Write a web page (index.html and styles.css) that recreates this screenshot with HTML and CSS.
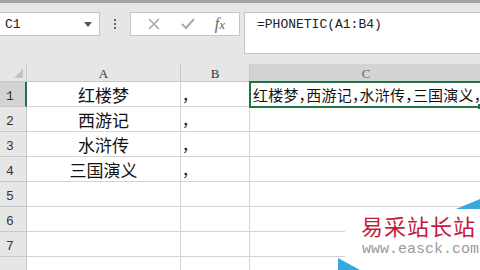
FILE: index.html
```html
<!DOCTYPE html>
<html lang="zh-CN">
<head>
    <meta charset="UTF-8">
    <title>PHONETIC</title>
    <link rel="stylesheet" href="styles.css">
</head>
<body>
    <div class="topline"></div>
    <!-- 名称框与编辑栏 -->
    <div class="toolbar">
        <div class="namebox">
            <span>C1</span>
            <svg width="8" height="5" viewBox="0 0 8 5"><path d="M0,0 L8,0 L4,5 Z" fill="#555"/></svg>
        </div>
        <div class="dots"><i></i><i></i><i></i></div>
        <div class="fxbox">
            <svg width="14" height="14" viewBox="0 0 14 14"><path d="M2,2 L12,12 M12,2 L2,12" stroke="#a8a8a8" stroke-width="1.6"/></svg>
            <svg width="14" height="14" viewBox="0 0 14 14"><path d="M1,7 L5,11 L13,2" stroke="#a8a8a8" stroke-width="2" fill="none"/></svg>
            <span class="fx">f<small>x</small></span>
        </div>
        <div class="formula">=PHONETIC(A1:B4)</div>
    </div>

    <!-- 表格 -->
    <div class="sheet">
        <div class="hd corner"><svg width="9" height="9" viewBox="0 0 9 9"><path d="M9,0 L9,9 L0,9 Z" fill="#c4c4c4"/></svg></div>
        <div class="hd">A</div>
        <div class="hd">B</div>
        <div class="hd sel">C</div>

        <div class="rh sel">1</div>
        <div class="cell a">红楼梦</div>
        <div class="cell b">，</div>
        <div class="cell c active">红楼梦，西游记，水浒传，三国演义，<span class="handle"></span></div>

        <div class="rh">2</div>
        <div class="cell a">西游记</div>
        <div class="cell b">，</div>
        <div class="cell c"></div>

        <div class="rh">3</div>
        <div class="cell a">水浒传</div>
        <div class="cell b">，</div>
        <div class="cell c"></div>

        <div class="rh">4</div>
        <div class="cell a">三国演义</div>
        <div class="cell b">，</div>
        <div class="cell c"></div>

        <div class="rh">5</div>
        <div class="cell a"></div>
        <div class="cell b"></div>
        <div class="cell c"></div>

        <div class="rh">6</div>
        <div class="cell a"></div>
        <div class="cell b"></div>
        <div class="cell c"></div>

        <div class="rh">7</div>
        <div class="cell a"></div>
        <div class="cell b"></div>
        <div class="cell c"></div>

        <div class="rh"></div>
        <div class="cell a"></div>
        <div class="cell b"></div>
        <div class="cell c"></div>
    </div>

    <!-- 水印 -->
    <div class="watermark">
        <span class="tri tri-top"></span>
        <div class="wm-title">易采站长站</div>
        <div class="wm-url">www.easck.com</div>
        <span class="tri tri-bottom"></span>
    </div>
</body>
</html>
```

FILE: styles.css
```css
body {
    margin: 0;
    width: 480px;
    height: 270px;
    overflow: hidden;
    background: #fff;
    font-family: "Liberation Mono", monospace;
    position: relative;
}
.topline {
    height: 3px;
    background: #a3a3a3;
}
.toolbar {
    display: flex;
    align-items: flex-start;
    background: #e6e6e6;
    height: 61px;
    padding-top: 9px;
    box-sizing: border-box;
}
.namebox {
    width: 100px;
    height: 24px;
    box-sizing: border-box;
    background: #fff;
    border: 1px solid #c6c6c6;
    border-left: none;
    display: flex;
    align-items: center;
    justify-content: space-between;
    padding: 0 7px 0 5px;
    font-size: 13px;
    color: #222;
}
.dots {
    width: 30px;
    height: 24px;
    display: flex;
    flex-direction: column;
    align-items: center;
    justify-content: center;
    gap: 2px;
}
.dots i {
    display: block;
    width: 2px;
    height: 2px;
    background: #666;
}
.fxbox {
    width: 110px;
    height: 24px;
    box-sizing: border-box;
    background: #fff;
    border: 1px solid #c6c6c6;
    display: flex;
    align-items: center;
    justify-content: space-around;
    padding: 0 4px 0 6px;
}
.fx {
    font-family: "Liberation Serif", serif;
    font-style: italic;
    font-size: 16px;
    color: #666;
}
.fx small {
    font-size: 13px;
}
.formula {
    flex: 1;
    margin-left: 4px;
    height: 42px;
    box-sizing: border-box;
    background: #fff;
    border: 1px solid #c6c6c6;
    border-right: none;
    padding: 4px 0 0 12px;
    font-size: 13px;
    color: #222;
}
.sheet {
    display: grid;
    grid-template-columns: 27px 154px 69px 1fr;
    grid-template-rows: 18px repeat(8, 25px);
}
.hd, .rh, .cell {
    box-sizing: border-box;
    border-right: 1px solid #d4d4d4;
    border-bottom: 1px solid #d4d4d4;
}
.hd {
    background: #e6e6e6;
    border-color: #c8c8c8;
    font-family: "Liberation Serif", serif;
    font-size: 13px;
    color: #333;
    display: flex;
    align-items: center;
    justify-content: center;
    padding-top: 2px;
}
.hd.corner {
    justify-content: flex-end;
    align-items: flex-end;
    padding: 0 3px 3px 0;
}
.hd.sel {
    background: #d3d3d3;
    color: #4a7a5e;
    border-bottom: 1px solid #c8c8c8;
}
.rh {
    background: #e6e6e6;
    border-color: #c8c8c8;
    font-family: "Liberation Mono", monospace;
    font-size: 13px;
    color: #333;
    display: flex;
    align-items: center;
    padding: 4px 0 0 6px;
}
.rh.sel {
    background: #d3d3d3;
    border-right: 2px solid #217346;
}
.cell {
    font-family: "Noto Sans CJK SC", sans-serif;
    color: #111;
    display: flex;
    align-items: center;
    white-space: nowrap;
}
.cell.a {
    justify-content: center;
    font-size: 17px;
}
.cell.b {
    font-size: 15px;
    padding-left: 1px;
    font-feature-settings: "halt";
}
.cell.c {
    border-right: none;
    font-size: 15px;
    letter-spacing: 0.2px;
    font-feature-settings: "halt";
}
.cell.active {
    position: relative;
    border: 2px solid #217346;
    margin: -1px 0 -1px -1px;
    padding-left: 2px;
    overflow: visible;
}
.handle {
    position: absolute;
    right: -2px;
    bottom: -3px;
    width: 5px;
    height: 5px;
    background: #217346;
}
.watermark {
    position: absolute;
    left: 345px;
    top: 208px;
    width: 135px;
    height: 62px;
    background: #fff;
}
.wm-title {
    font-family: "Noto Sans CJK SC", serif;
    font-size: 22px;
    letter-spacing: 1px;
    color: #c41a3c;
    line-height: 26px;
    margin: 4px 0 0 16px;
}
.wm-url {
    font-family: "Liberation Mono", monospace;
    font-size: 15px;
    line-height: 16px;
    color: #9a9a9a;
    margin: 4px 0 0 17px;
}
.tri {
    position: absolute;
    width: 0;
    height: 0;
}
.tri-top {
    right: 0;
    top: -9px;
    border-left: 24px solid transparent;
    border-bottom: 10px solid #3ba7e0;
}
.tri-bottom {
    left: -7px;
    bottom: 0;
    border-right: 22px solid transparent;
    border-bottom: 12px solid #3ba7e0;
}
```
